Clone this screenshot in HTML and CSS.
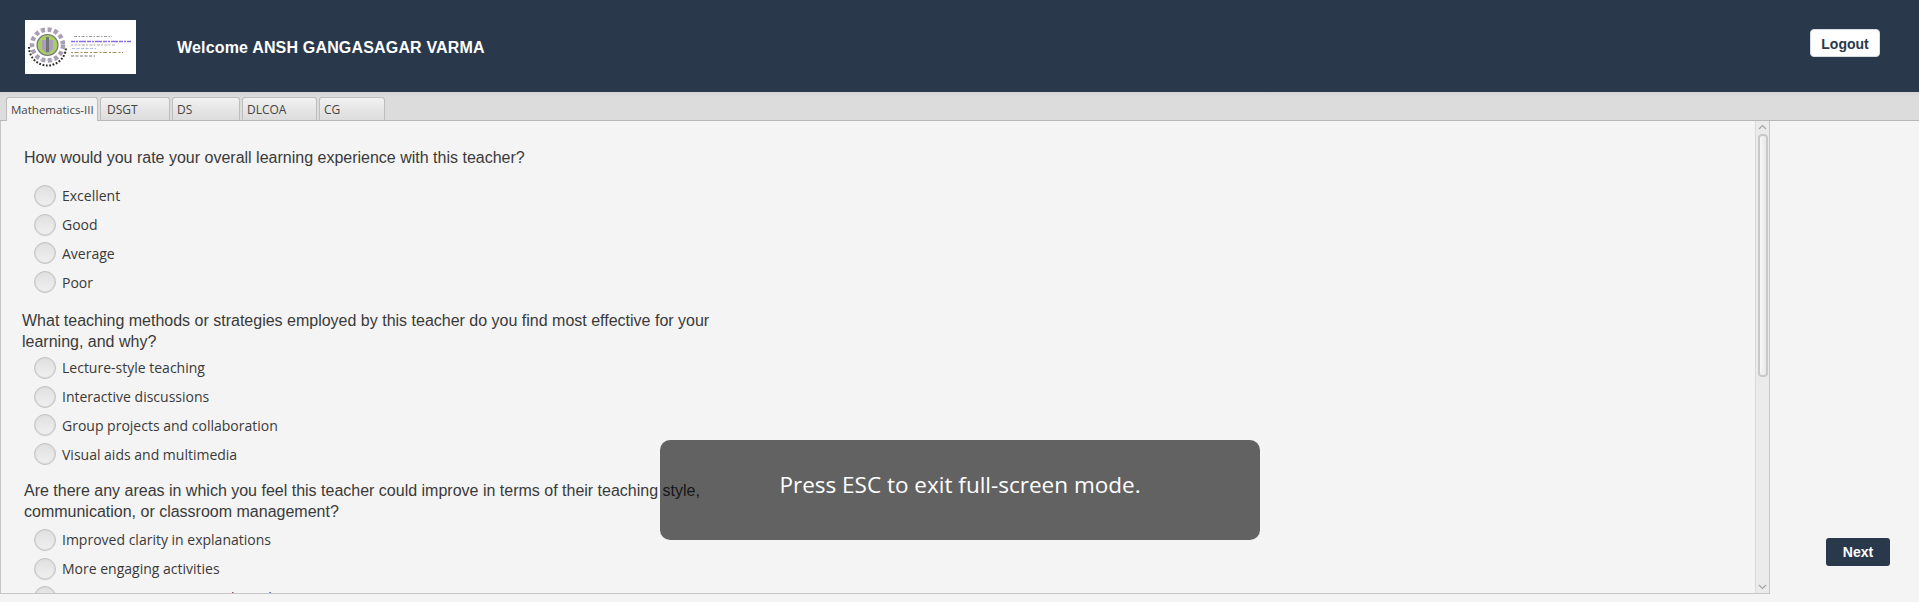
FILE: index.html
```html
<!DOCTYPE html>
<html lang="en">
<head>
<meta charset="utf-8">
<title>Feedback</title>
<link rel="stylesheet" href="styles.css">
</head>
<body>
<div class="app">
  <header class="header">
    <div class="logo">
      <svg width="111" height="54" viewBox="0 0 111 54">
        <rect width="111" height="54" fill="#fff"/>
        <circle cx="22.5" cy="25" r="15.5" fill="none" stroke="#a89fb4" stroke-width="4.5" stroke-dasharray="4 2.6"/>
        <path d="M4 27 A18.5 18.5 0 0 0 41 27" fill="none" stroke="#2a2a2a" stroke-width="2" stroke-dasharray="1.8 1.6"/>
        <circle cx="22.5" cy="25" r="10.5" fill="#a9cf63" stroke="#77737a" stroke-width="1.2"/>
        <path d="M17 20 H28 V29 L22.5 34 L17 29 Z" fill="#a99fb8"/>
        <rect x="21" y="17" width="3" height="15" fill="#77737a"/>
        <path d="M15 40 H30" stroke="#bbb" stroke-width="1" stroke-dasharray="2 1.5"/>
        <path d="M49 16.5 H87" stroke="#999" stroke-width="1.1" stroke-dasharray="3 1.5 1.5 1.5"/>
        <path d="M46 21.5 H106" stroke="#8a6cf0" stroke-width="1.6" stroke-dasharray="4 1 2 1 7 1"/>
        <path d="M46 25 H90" stroke="#aaa" stroke-width="1" stroke-dasharray="2 1.5 3 1"/>
        <path d="M47 28.5 H71" stroke="#a9bde6" stroke-width="1" stroke-dasharray="3 1.5"/>
        <path d="M46 32.5 H98" stroke="#a58a5c" stroke-width="1" stroke-dasharray="2 1.5 4 2"/>
        <path d="M46 36 H70" stroke="#777" stroke-width="1" stroke-dasharray="3 1.5"/>
      </svg>
    </div>
    <h1 class="welcome">Welcome ANSH GANGASAGAR VARMA</h1>
    <button class="logout" type="button">Logout</button>
  </header>

  <nav class="tabs">
    <div class="tab tab-active tab-math">Mathematics-III</div>
    <div class="tab tab-dsgt">DSGT</div>
    <div class="tab tab-ds">DS</div>
    <div class="tab tab-dlcoa">DLCOA</div>
    <div class="tab tab-cg">CG</div>
  </nav>

  <main class="main">
    <section class="panel">
      <div class="questions">
        <div class="group group-one">
          <p class="question q-one">How would you rate your overall learning experience with this teacher?</p>
          <div class="option"><span class="radio"></span>Excellent</div>
          <div class="option"><span class="radio"></span>Good</div>
          <div class="option"><span class="radio"></span>Average</div>
          <div class="option"><span class="radio"></span>Poor</div>
        </div>
        <div class="group group-two">
          <p class="question q-two">What teaching methods or strategies employed by this teacher do you find most effective for your learning, and why?</p>
          <div class="option"><span class="radio"></span>Lecture-style teaching</div>
          <div class="option"><span class="radio"></span>Interactive discussions</div>
          <div class="option"><span class="radio"></span>Group projects and collaboration</div>
          <div class="option"><span class="radio"></span>Visual aids and multimedia</div>
        </div>
        <div class="group group-three">
          <p class="question q-three">Are there any areas in which you feel this teacher could improve in terms of their teaching style, communication, or classroom management?</p>
          <div class="option"><span class="radio"></span>Improved clarity in explanations</div>
          <div class="option"><span class="radio"></span>More engaging activities</div>
          <div class="option"><span class="radio"></span>Better communication with students</div>
        </div>
      </div>
      <div class="scrollbar">
        <svg class="arrow" width="13" height="12" viewBox="0 0 13 12"><path d="M3 8 L6.5 4.5 L10 8" fill="none" stroke="#a4a4a4" stroke-width="1.2"/></svg>
        <div class="track"><div class="thumb"></div></div>
        <svg class="arrow" width="13" height="12" viewBox="0 0 13 12"><path d="M3 4 L6.5 7.5 L10 4" fill="none" stroke="#a4a4a4" stroke-width="1.2"/></svg>
      </div>
    </section>
    <aside class="side">
      <button class="next" type="button">Next</button>
    </aside>
  </main>
</div>
<div class="toast">Press ESC to exit full-screen mode.</div>
</body>
</html>
```
FILE: styles.css
```css
* { box-sizing: border-box; }
html, body { margin: 0; height: 100%; overflow: hidden; }
body { background: #f4f4f4; font-family: "Liberation Sans", Arial, sans-serif; color: #333; }
.app { display: flex; flex-direction: column; height: 602px; }

.header { flex: 0 0 92px; display: flex; align-items: center; background: #29384b; padding: 0 39px 0 25px; }
.logo { width: 111px; height: 54px; margin-top: 2px; }
.logo svg { display: block; }
.welcome { margin: 4px 0 0 41px; font-size: 16px; letter-spacing: .17px; font-weight: 700; color: #fff; flex: 1; }
.logout { width: 70px; height: 28px; margin-top: -6px; border: 1px solid #d8dce2; border-radius: 4px; background: #fff; color: #29384b; font: 700 14px/26px "Liberation Sans", Arial, sans-serif; padding: 1px 0 0; }

.tabs { flex: 0 0 29px; display: flex; align-items: flex-end; gap: 2px; padding-left: 6px; background: linear-gradient(#d4d4d4, #dcdcdc 5px); border-bottom: 1px solid #b8b8b8; }
.tab { height: 23px; border: 1px solid #bdbdbd; border-bottom: 0; border-radius: 3px 3px 0 0; background: linear-gradient(#f1f1f1, #dcdcdc); font: 12px/24px "Open Sans", sans-serif; color: #444; padding-left: 4px; white-space: nowrap; overflow: hidden; }
.tab-active { height: 24px; margin-bottom: -1px; background: linear-gradient(#f3f3f3, #f4f4f4); }
.tab-math { width: 92px; font-size: 11.5px; line-height: 23px; }
.tab-dsgt { width: 70px; padding-left: 6px; }
.tab-ds { width: 68px; }
.tab-dlcoa { width: 75px; }
.tab-cg { width: 66px; }

.main { flex: 1; display: flex; min-height: 0; padding-bottom: 8px; }
.panel { width: 1770px; display: flex; border: 1px solid #c6c6c6; border-top: 0; overflow: hidden; }
.questions { flex: 1; overflow: hidden; padding-top: 26px; }
.question { margin: 0; width: 710px; font-size: 16px; line-height: 21px; color: #3a3a3a; }
.q-one { padding-left: 23px; }
.q-two { padding-left: 21px; }
.q-three { padding-left: 23px; }
.group-one .question { margin-bottom: 13px; }
.group-two { margin-top: 13px; }
.group-three { margin-top: 11px; }
.group-two .question { margin-bottom: 1px; }
.group-three .question { margin-bottom: 3px; }
.option { height: 29px; display: flex; align-items: center; padding-left: 33px; font: 14px "Open Sans", sans-serif; color: #3a3a3a; }
.option:nth-of-type(3) { height: 28px; }
.option:nth-of-type(4) { height: 30px; }
.radio { width: 22px; height: 22px; margin-right: 6px; border: 1px solid #c2c2c2; border-radius: 50%; background: linear-gradient(#e0e0e0, #f0f0f0); box-shadow: inset 0 0 0 1px #dcdcdc; }

.scrollbar { flex: 0 0 13px; display: flex; flex-direction: column; background: #ebebeb; border-left: 1px solid #dadada; }
.arrow { display: block; flex: 0 0 12px; }
.track { flex: 1; padding: 1px 1px 0 2px; }
.thumb { height: 243px; border: 2px solid #c9c9c9; border-radius: 4px; background: linear-gradient(90deg, #f7f7f7, #e8e8e8); }

.side { flex: 1; display: flex; align-items: flex-end; justify-content: flex-end; padding: 0 29px 28px 0; }
.next { width: 64px; height: 28px; border: 0; border-radius: 3px; background: #29384b; color: #fff; font: 700 14px "Liberation Sans", Arial, sans-serif; padding: 0; }

.toast { position: absolute; left: 660px; top: 440px; width: 600px; height: 100px; padding-bottom: 12px; display: flex; align-items: center; justify-content: center; border-radius: 10px; background: rgba(0, 0, 0, .6); color: #fff; font: 500 22.5px "Open Sans", sans-serif; }
```
